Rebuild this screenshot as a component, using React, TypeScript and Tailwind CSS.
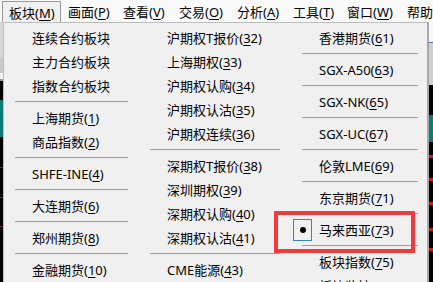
type Entry =
  | { sep: true }
  | { sep?: false; name: string; num?: string; checked?: boolean };

const S: Entry = { sep: true };

const COL1: Entry[] = [
  { name: "连续合约板块" },
  { name: "主力合约板块" },
  { name: "指数合约板块" },
  S,
  { name: "上海期货", num: "1" },
  { name: "商品指数", num: "2" },
  S,
  { name: "SHFE-INE", num: "4" },
  S,
  { name: "大连期货", num: "6" },
  S,
  { name: "郑州期货", num: "8" },
  S,
  { name: "金融期货", num: "10" },
];

const COL2: Entry[] = [
  { name: "沪期权T报价", num: "32" },
  { name: "上海期权", num: "33" },
  { name: "沪期权认购", num: "34" },
  { name: "沪期权认沽", num: "35" },
  { name: "沪期权连续", num: "36" },
  S,
  { name: "深期权T报价", num: "38" },
  { name: "深圳期权", num: "39" },
  { name: "深期权认购", num: "40" },
  { name: "深期权认沽", num: "41" },
  S,
  { name: "CME能源", num: "43" },
];

const COL3: Entry[] = [
  { name: "香港期货", num: "61" },
  S,
  { name: "SGX-A50", num: "63" },
  S,
  { name: "SGX-NK", num: "65" },
  S,
  { name: "SGX-UC", num: "67" },
  S,
  { name: "伦敦LME", num: "69" },
  S,
  { name: "东京期货", num: "71" },
  S,
  { name: "马来西亚", num: "73", checked: true },
  S,
  { name: "板块指数", num: "75" },
  { name: "板块监控", num: "77" },
];

const BAR = [
  { name: "板块", key: "M", w: "w-[59px]", pl: "pl-[6px]" },
  { name: "画面", key: "P", w: "w-[56px]", pl: "pl-[7px]" },
  { name: "查看", key: "V", w: "w-[55px]", pl: "pl-[6px]" },
  { name: "交易", key: "O", w: "w-[58px]", pl: "pl-[7px]" },
  { name: "分析", key: "A", w: "w-[56px]", pl: "pl-[7px]" },
  { name: "工具", key: "T", w: "w-[54px]", pl: "pl-[7px]" },
  { name: "窗口", key: "W", w: "w-[60px]", pl: "pl-[7px]" },
  { name: "帮助", key: "H", w: "w-[60px]", pl: "pl-[7px]" },
];

function Label({ name, num }: { name: string; num?: string }) {
  if (!num) return <span>{name}</span>;
  return (
    <span>
      {name}(<u className="underline-offset-2">{num[0]}</u>
      {num.slice(1)})
    </span>
  );
}

function Column({
  items,
  width,
  pl,
  sepL,
  sepR,
}: {
  items: Entry[];
  width: string;
  pl: string;
  sepL: string;
  sepR: string;
}) {
  return (
    <div className={`${width} flex shrink-0 flex-col pt-[3px]`}>
      {items.map((it, i) =>
        it.sep ? (
          <div key={i} className={`h-2 shrink-0 pt-[3px] ${sepL} ${sepR}`}>
            <div className="h-px bg-[#a0a0a0]" />
          </div>
        ) : (
          <div
            key={i}
            className={`relative flex h-6 shrink-0 items-center whitespace-nowrap ${pl}`}
          >
            {it.checked && (
              <div className="absolute left-[3px] top-px flex h-[22px] w-[19px] items-center justify-center border border-[#3f80c4] bg-[#f0f0f0]">
                <div className="h-[6px] w-[6px] rounded-full bg-black" />
              </div>
            )}
            <Label name={it.name} num={it.num} />
          </div>
        )
      )}
    </div>
  );
}

export default function App() {
  return (
    <div
      className="relative h-[282px] w-[433px] overflow-hidden bg-black text-[13px] leading-none text-black"
      style={{ fontFamily: '"Noto Sans", "Noto Sans CJK SC", sans-serif' }}
    >
      {/* menu bar */}
      <div className="flex h-[22px] bg-[#f9f9f9] pl-[2px]">
        {BAR.map((b, i) => (
          <div
            key={b.key}
            className={`flex shrink-0 items-center whitespace-nowrap pt-[2px] ${b.w} ${b.pl} ${
              i === 0
                ? "mt-px border-x border-t border-[#999999] bg-[#f0f0f0]"
                : ""
            }`}
          >
            {b.name}(<u className="underline-offset-2">{b.key}</u>)
          </div>
        ))}
      </div>

      <div className="flex h-[260px]">
        {/* app content peeking on the left */}
        <div className="flex w-[3px] shrink-0 flex-col">
          <div className="h-[36px] bg-[#d6d6d6]" />
          <div className="h-[15px] bg-[#c9c9c9]" />
          <div className="h-[6px] bg-[#f2f2f2]" />
          <div className="h-[2px] bg-[#9a9a9a]" />
          <div className="h-[19px] bg-black" />
          <div className="h-[37px] bg-[#0b7b78]" />
          <div className="h-[30px] bg-black" />
          <div className="h-px bg-[#7a2a1a]" />
          <div className="h-[29px] bg-black" />
          <div className="h-px bg-[#7a2a1a]" />
          <div className="h-[28px] bg-black" />
          <div className="h-px bg-[#7a2a1a]" />
          <div className="flex-1 bg-black" />
        </div>

        {/* dropdown */}
        <div className="flex w-[424px] shrink-0 border-l border-t border-[#bdbdbd] bg-[#f0f0f0]">
          <Column items={COL1} width="w-[134px]" pl="pl-[28px]" sepL="ml-[11px]" sepR="mr-[10px]" />
          <Column items={COL2} width="w-[152px]" pl="pl-[29px]" sepL="ml-3" sepR="mr-[10px]" />
          <Column items={COL3} width="w-[137px]" pl="pl-[29px]" sepL="ml-3" sepR="mr-[9px]" />
        </div>

        {/* shadow + app content on the right */}
        <div className="w-[2px] shrink-0 bg-[#a9a9a9]" />
        <div className="flex flex-1 flex-col">
          <div className="h-[20px] bg-[#f6f6f6]" />
          <div className="h-px bg-[#3a78d0]" />
          <div className="h-[42px] bg-[#cfcfcf]" />
          <div className="h-[30px] bg-black" />
          <div className="h-[27px] bg-[#0b7b78]" />
          <div className="h-[13px] bg-black" />
          <div className="h-[3px] bg-[#e01010]" />
          <div className="h-[20px] bg-black" />
          <div className="h-[3px] bg-[#e01010]" />
          <div className="h-[21px] bg-black" />
          <div className="h-[3px] bg-[#e01010]" />
          <div className="h-[23px] bg-black" />
          <div className="h-[3px] bg-[#e01010]" />
          <div className="h-[17px] bg-black" />
          <div className="h-[3px] bg-[#e01010]" />
          <div className="flex-1 bg-black" />
        </div>
      </div>

      {/* annotation box */}
      <div className="absolute left-[274px] top-[211px] h-[42px] w-[141px] border-4 border-[#f23a3a]" />
    </div>
  );
}
